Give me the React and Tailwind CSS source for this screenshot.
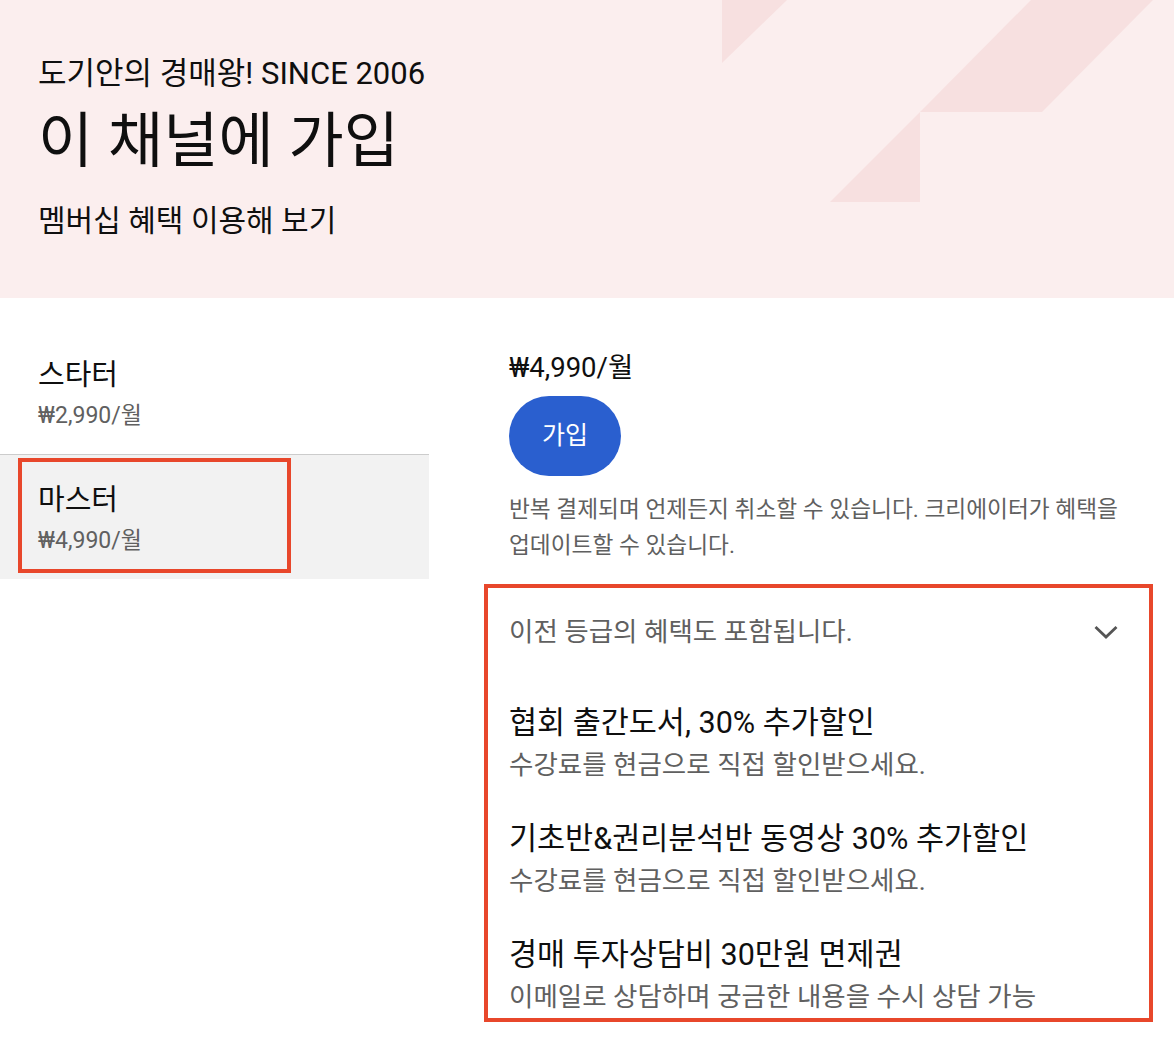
import React from "react";

function HeaderShapes() {
  return (
    <svg
      className="absolute left-0 top-0 pointer-events-none"
      width="1174"
      height="298"
      viewBox="0 0 1174 298"
    >
      <polygon points="722,0 787,0 722,63" fill="#f7e0e0" />
      <polygon points="1031,0 1153,0 1042,112 920,112" fill="#f7e0e0" />
      <polygon points="920,112 920,202 830,202" fill="#f7e0e0" />
    </svg>
  );
}

function Chevron() {
  return (
    <svg width="26" height="16" viewBox="0 0 26 16" fill="none">
      <polyline
        points="2.5,3 13,13 23.5,3"
        stroke="#555555"
        strokeWidth="2.8"
        strokeLinecap="butt"
        strokeLinejoin="miter"
      />
    </svg>
  );
}

const benefits = [
  { title: "협회 출간도서, 30% 추가할인", sub: "수강료를 현금으로 직접 할인받으세요." },
  { title: "기초반&권리분석반 동영상 30% 추가할인", sub: "수강료를 현금으로 직접 할인받으세요." },
  { title: "경매 투자상담비 30만원 면제권", sub: "이메일로 상담하며 궁금한 내용을 수시 상담 가능" },
];

export default function App() {
  return (
    <div className="w-[1174px] min-h-[1042px] bg-white text-[#0f0f0f] font-['Roboto','Noto_Sans_CJK_KR',sans-serif]">
      {/* Header */}
      <div className="relative h-[298px] bg-[#fbeeee] overflow-hidden">
        <HeaderShapes />
        <div className="relative flex flex-col pl-[38px] pt-[58px]">
          <div className="text-[31px] leading-none">도기안의 경매왕! SINCE 2006</div>
          <div className="mt-[23px] text-[60px] leading-none">이 채널에 가입</div>
          <div className="mt-[34px] text-[30px] leading-none">멤버십 혜택 이용해 보기</div>
        </div>
      </div>

      {/* Body */}
      <div className="flex">
        {/* Left tiers */}
        <div className="w-[429px] flex flex-col">
          <div className="h-[157px] pl-[38px] pt-[63px] border-b border-[#cccccc]">
            <div className="text-[29px] leading-none">스타터</div>
            <div className="mt-[14px] text-[23px] leading-none text-[#606060]">₩2,990/월</div>
          </div>
          <div className="relative h-[124px] bg-[#f2f2f2] pl-[38px] pt-[31px]">
            <div className="text-[29px] leading-none">마스터</div>
            <div className="mt-[14px] text-[23px] leading-none text-[#606060]">₩4,990/월</div>
            <div className="absolute left-[18px] top-[3px] w-[273px] h-[115px] border-4 border-[#e8472b]" />
          </div>
        </div>

        {/* Right detail */}
        <div className="ml-[55px] w-[669px] flex flex-col pt-[56px]">
          <div className="pl-[25px] flex flex-col items-start">
            <div className="text-[27.5px] leading-none">₩4,990/월</div>
            <button className="mt-[14px] w-[112px] h-[80px] rounded-full bg-[#2a5fcf] text-white text-[25px] leading-none flex items-center justify-center">
              가입
            </button>
            <p className="mt-[16px] text-[22.7px] leading-[36px] text-[#606060] whitespace-nowrap">
              반복 결제되며 언제든지 취소할 수 있습니다. 크리에이터가 혜택을
              <br />
              업데이트할 수 있습니다.
            </p>
          </div>

          <div className="mt-[20px] border-4 border-[#e8472b] pl-[21px] pr-[30px] pt-[26px] pb-[4px]">
            <div className="flex items-center justify-between h-[36px]">
              <span className="text-[26.5px] leading-[36px] text-[#606060] whitespace-nowrap">이전 등급의 혜택도 포함됩니다.</span>
              <Chevron />
            </div>
            <div className="mt-[53px] flex flex-col gap-[37px]">
              {benefits.map((b, i) => (
                <div key={i} className="flex flex-col">
                  <div className="text-[30.5px] leading-[40px] whitespace-nowrap">{b.title}</div>
                  <div className="mt-[5px] text-[26.5px] leading-[34px] text-[#606060] whitespace-nowrap">{b.sub}</div>
                </div>
              ))}
            </div>
          </div>
        </div>
      </div>
    </div>
  );
}
